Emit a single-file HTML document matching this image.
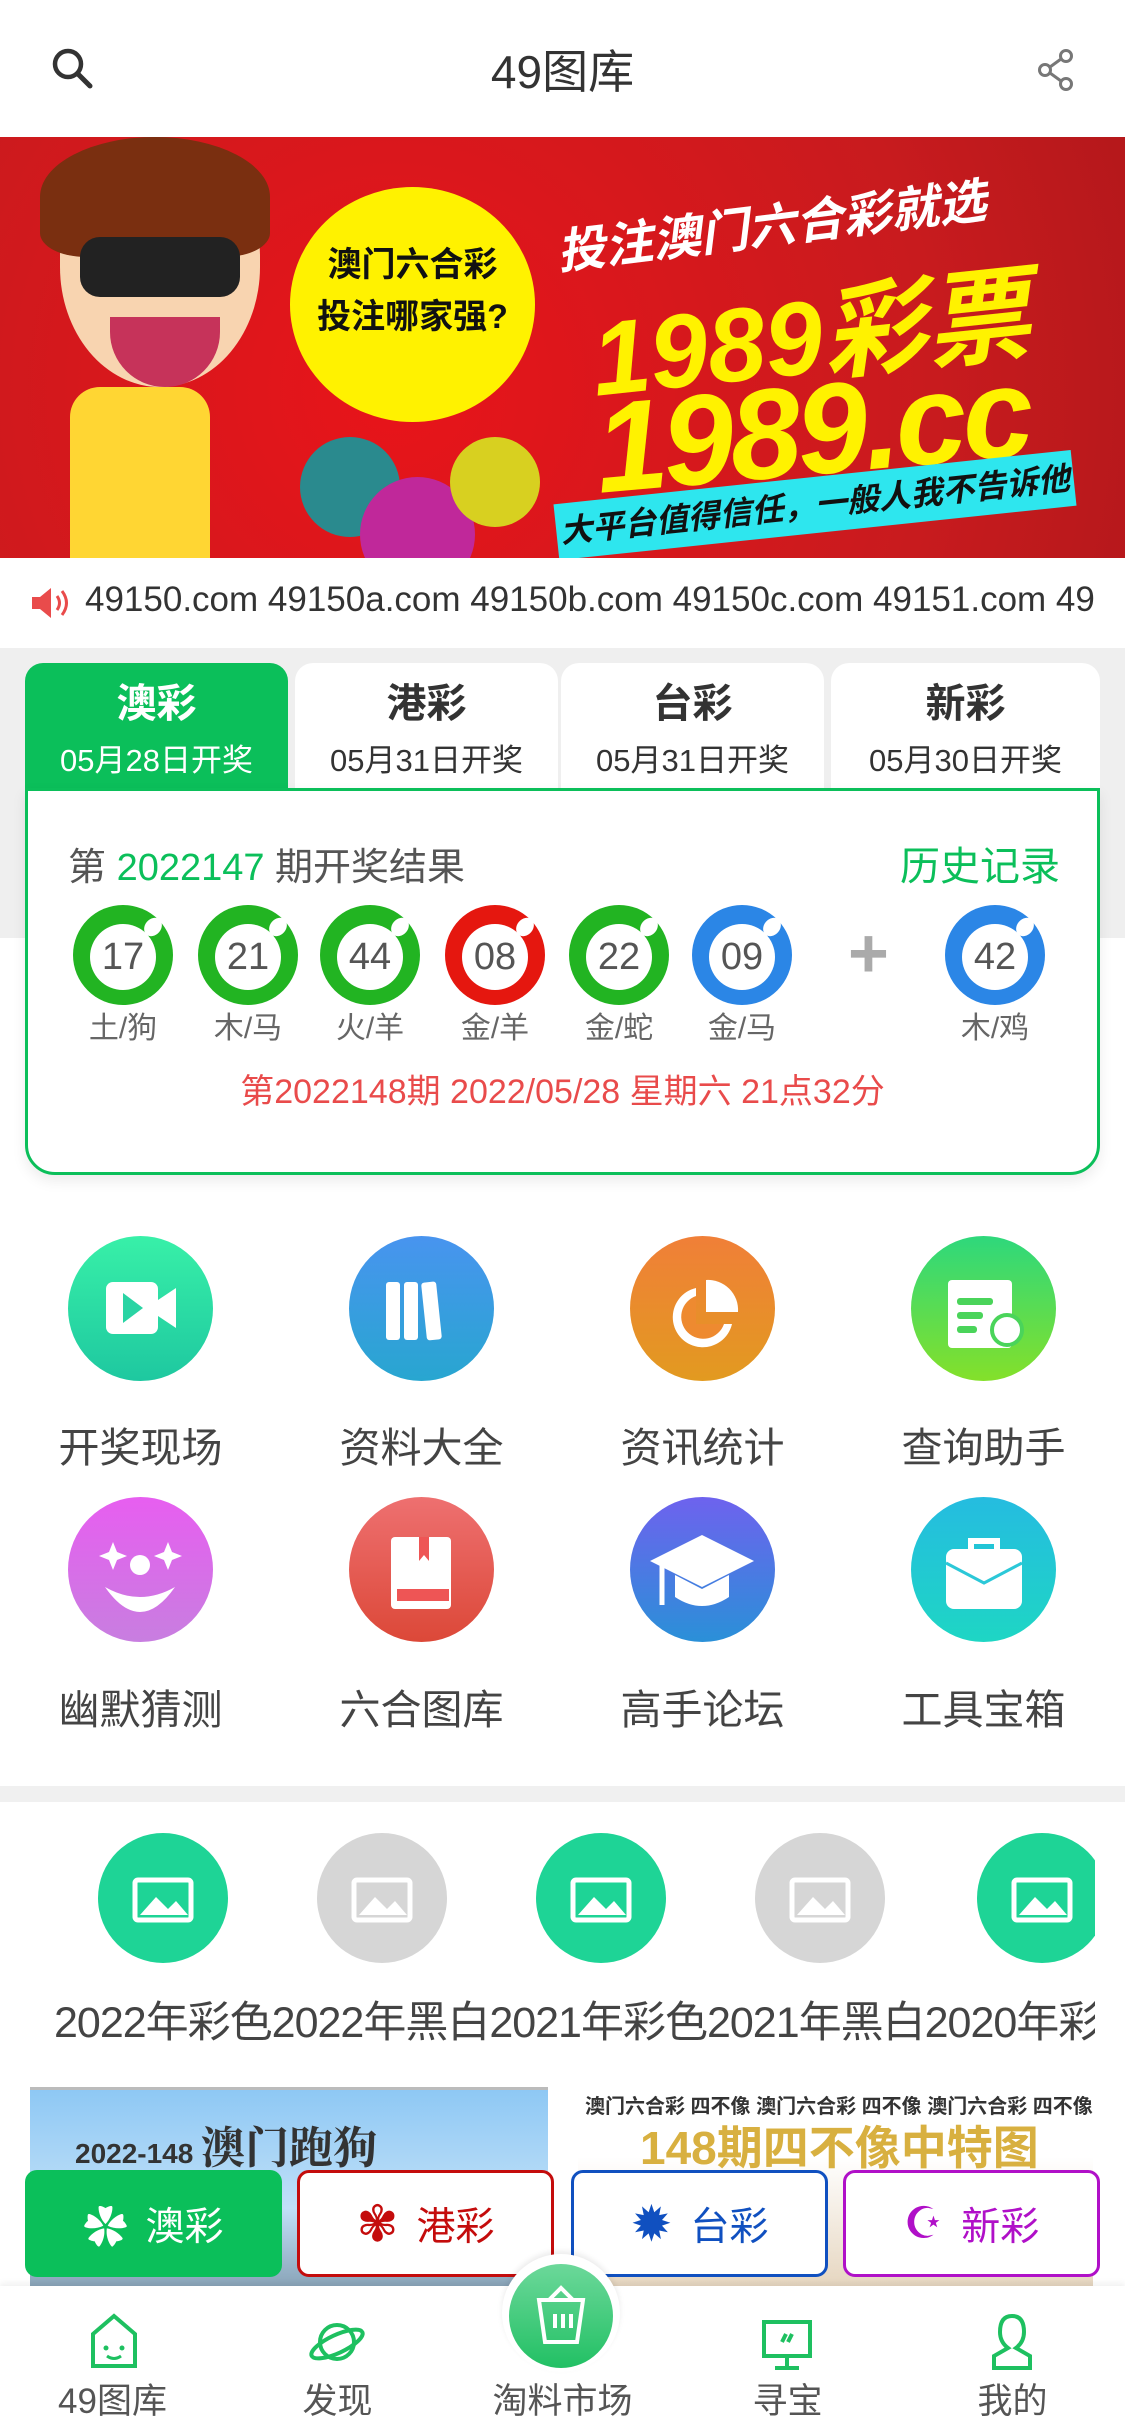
<!DOCTYPE html>
<html><head><meta charset="utf-8"><style>
*{margin:0;padding:0;box-sizing:border-box}
body{width:1125px;height:2436px;position:relative;overflow:hidden;background:#fff;font-family:"Liberation Sans","Noto Sans CJK SC",sans-serif;color:#333}
.a{position:absolute}
.c{text-align:center}
.tab{position:absolute;top:663px;height:127px;width:263px;background:#fff;border-radius:18px 18px 0 0;text-align:center}
.tab b{display:block;font-size:40px;margin-top:8px;color:#333}
.tab span{display:block;font-size:31px;margin-top:6px;color:#333}
.ball{position:absolute;top:905px;width:100px;height:100px;border-radius:50%}
.ball i{position:absolute;left:17px;top:19px;width:66px;height:66px;border-radius:50%;background:#fff;font-style:normal;font-size:38px;color:#555;line-height:66px;text-align:center}
.ball s{position:absolute;right:12px;top:12px;width:16px;height:20px;border-radius:50%;background:#fff;transform:rotate(40deg)}
.zl{position:absolute;top:1003px;width:110px;text-align:center;font-size:30px;color:#666}
.ic{position:absolute;width:145px;height:145px;border-radius:50%}
.lb{position:absolute;width:281px;text-align:center;font-size:41px;color:#444}
.gc{position:absolute;top:1833px;width:130px;height:130px;border-radius:50%}
.btn{position:absolute;top:2170px;height:107px;width:257px;border-radius:12px;font-size:39px;display:flex;align-items:center;justify-content:center;gap:18px;background:#fff}
.nv{position:absolute;top:2373px;width:225px;text-align:center;font-size:35px;color:#555}
</style></head><body>
<svg class="a" style="left:50px;top:46px" width="44" height="44" viewBox="0 0 44 44"><circle cx="18" cy="18" r="13" fill="none" stroke="#333" stroke-width="4.5"/><path d="M28 28L40 40" stroke="#333" stroke-width="5" stroke-linecap="round"/></svg>
<div class="a c" style="left:0;width:1125px;top:36px;font-size:46px;color:#333">49图库</div>
<svg class="a" style="left:1036px;top:48px" width="40" height="44" viewBox="0 0 40 44"><circle cx="30" cy="8" r="5.5" fill="none" stroke="#777" stroke-width="3"/><circle cx="9" cy="22" r="5.5" fill="none" stroke="#777" stroke-width="3"/><circle cx="30" cy="36" r="5.5" fill="none" stroke="#777" stroke-width="3"/><path d="M14 19L25 11M14 25L25 33" stroke="#777" stroke-width="3"/></svg>
<div class="a" style="left:0;top:137px;width:1125px;height:421px;background:radial-gradient(circle at 35% 60%,#e8141a,#c81b1e 70%,#b5181b);overflow:hidden">
 <div class="a" style="left:290px;top:50px;width:245px;height:235px;border-radius:50%;background:#fff200"></div>
 <div class="a c" style="left:290px;top:102px;width:245px;font-size:34px;font-weight:bold;color:#111;line-height:52px">澳门六合彩<br>投注哪家强?</div>
 <div class="a" style="left:60px;top:10px;width:200px;height:240px;border-radius:45% 45% 50% 50%;background:#f8d4b0"></div>
 <div class="a" style="left:40px;top:0;width:230px;height:120px;border-radius:50% 50% 20% 20%;background:#7a2f10"></div>
 <div class="a" style="left:80px;top:100px;width:160px;height:60px;border-radius:20px;background:#222"></div>
 <div class="a" style="left:110px;top:180px;width:110px;height:70px;border-radius:0 0 60px 60px;background:#c6335a"></div>
 <div class="a" style="left:70px;top:250px;width:140px;height:171px;background:#ffd633;border-radius:30px 30px 0 0"></div>
 <div class="a" style="left:300px;top:300px;width:100px;height:100px;border-radius:50%;background:#2a8a8e"></div>
 <div class="a" style="left:360px;top:340px;width:115px;height:115px;border-radius:50%;background:#c0289a"></div>
 <div class="a" style="left:450px;top:300px;width:90px;height:90px;border-radius:50%;background:#d8d020"></div>
 <div class="a" style="left:555px;top:50px;font-size:48px;font-weight:bold;color:#fff;font-style:italic;transform:rotate(-7deg)">投注澳门六合彩就选</div>
 <div class="a" style="left:590px;top:115px;font-size:104px;font-weight:bold;color:#fff200;font-style:italic;transform:rotate(-6deg)">1989彩票</div>
 <div class="a" style="left:595px;top:220px;font-size:128px;font-weight:bold;color:#fff200;font-style:italic;transform:rotate(-5deg);letter-spacing:-4px">1989.cc</div>
 <div class="a" style="left:555px;top:340px;width:520px;height:56px;background:#2ee6ee;transform:rotate(-6deg);font-size:32px;font-weight:bold;color:#111;text-align:center;line-height:56px;font-style:italic">大平台值得信任，一般人我不告诉他</div>
</div>
<svg class="a" style="left:30px;top:584px" width="42" height="38" viewBox="0 0 42 38"><path d="M2 13h8l11-9v30l-11-9H2z" fill="#e94b4b"/><path d="M27 12q5 7 0 14M32 7q9 12 0 24" stroke="#e94b4b" stroke-width="3" fill="none"/></svg>
<div class="a" style="left:85px;top:580px;width:1010px;overflow:hidden;white-space:nowrap;font-size:35px;color:#333">49150.com 49150a.com 49150b.com 49150c.com 49151.com 49</div>
<div class="a" style="left:0;top:648px;width:1125px;height:290px;background:#efefef"></div>
<div class="tab" style="left:25px;background:#0bbf5a"><b style="color:#fff">澳彩</b><span style="color:#fff">05月28日开奖</span></div>
<div class="tab" style="left:295px"><b>港彩</b><span>05月31日开奖</span></div>
<div class="tab" style="left:561px"><b>台彩</b><span>05月31日开奖</span></div>
<div class="tab" style="left:831px;width:269px"><b>新彩</b><span>05月30日开奖</span></div>
<div class="a" style="left:25px;top:788px;width:1075px;height:387px;background:#fff;border:3px solid #0bbf5a;border-radius:0 0 30px 30px;box-shadow:0 6px 14px rgba(0,0,0,.08)"></div>
<div class="a" style="left:68px;top:836px;font-size:38px;color:#555">第 <span style="color:#0bbf5a">2022147</span> 期开奖结果</div>
<div class="a" style="left:900px;top:834px;font-size:40px;color:#0bbf5a">历史记录</div>
<div class="ball" style="left:73px;background:#22b422"><i>17</i><s></s></div>
<div class="ball" style="left:198px;background:#22b422"><i>21</i><s></s></div>
<div class="ball" style="left:320px;background:#22b422"><i>44</i><s></s></div>
<div class="ball" style="left:445px;background:#e5170f"><i>08</i><s></s></div>
<div class="ball" style="left:569px;background:#22b422"><i>22</i><s></s></div>
<div class="ball" style="left:692px;background:#2b86e6"><i>09</i><s></s></div>
<div class="a" style="left:848px;top:918px;font-size:70px;color:#aaa;font-weight:bold;line-height:70px">+</div>
<div class="ball" style="left:945px;background:#2b86e6"><i>42</i><s></s></div>
<div class="zl" style="left:68px">土/狗</div><div class="zl" style="left:193px">木/马</div><div class="zl" style="left:315px">火/羊</div><div class="zl" style="left:440px">金/羊</div><div class="zl" style="left:564px">金/蛇</div><div class="zl" style="left:687px">金/马</div><div class="zl" style="left:940px">木/鸡</div>
<div class="a c" style="left:25px;width:1075px;top:1064px;font-size:34px;color:#e94b4b">第2022148期 2022/05/28 星期六 21点32分</div>
<div class="ic" style="left:68px;top:1236px;background:linear-gradient(#38f0a8,#1ec8a0)"><svg width="145" height="145"><rect x="38" y="46" width="52" height="52" rx="7" fill="#fff"/><path d="M90 64l18-12v40l-18-12z" fill="#fff"/><path d="M55 57v30l20-15z" fill="#2ad4a4"/></svg></div>
<div class="ic" style="left:349px;top:1236px;background:linear-gradient(#4894ef,#28a6d0)"><svg width="145" height="145"><rect x="37" y="46" width="14" height="58" rx="3" fill="#fff"/><rect x="55" y="46" width="14" height="58" rx="3" fill="#fff"/><rect x="75" y="46" width="15" height="58" rx="3" fill="#fff" transform="rotate(-6 82 75)"/></svg></div>
<div class="ic" style="left:630px;top:1236px;background:linear-gradient(#f07f38,#e29a20)"><svg width="145" height="145"><path d="M66 52A30 30 0 1 0 102 88H66z" fill="#fff"/><path d="M76 44a30 30 0 0 1 32 32H76z" fill="#fff"/><path d="M66 60A22 22 0 1 0 94 88H66z" fill="#ee8a30"/></svg></div>
<div class="ic" style="left:911px;top:1236px;background:linear-gradient(#2ed87c,#84e02a)"><svg width="145" height="145"><rect x="37" y="44" width="64" height="68" rx="4" fill="#fff"/><rect x="46" y="62" width="36" height="7" rx="3" fill="#4ad45a"/><rect x="46" y="76" width="26" height="7" rx="3" fill="#4ad45a"/><rect x="46" y="90" width="20" height="7" rx="3" fill="#4ad45a"/><circle cx="96" cy="94" r="15" fill="#fff" stroke="#4ad45a" stroke-width="4"/></svg></div>
<div class="lb" style="left:0;top:1414px">开奖现场</div><div class="lb" style="left:281px;top:1414px">资料大全</div><div class="lb" style="left:562px;top:1414px">资讯统计</div><div class="lb" style="left:843px;top:1414px">查询助手</div>
<div class="ic" style="left:68px;top:1497px;background:linear-gradient(#e75ef0,#c87ee0)"><svg width="145" height="145"><path d="M37 90q35 50 70 0q-35 20-70 0z" fill="#fff"/><circle cx="72" cy="68" r="10" fill="#fff"/><path d="M45 45l4 10 10 4-10 4-4 10-4-10-10-4 10-4z M100 45l4 10 10 4-10 4-4 10-4-10-10-4 10-4z" fill="#fff"/></svg></div>
<div class="ic" style="left:349px;top:1497px;background:linear-gradient(#ee7070,#dc4838)"><svg width="145" height="145"><rect x="42" y="40" width="60" height="72" rx="4" fill="#fff"/><path d="M70 40v24l5-6 5 6V40z" fill="#e55"/><rect x="48" y="92" width="52" height="12" fill="#e55"/></svg></div>
<div class="ic" style="left:630px;top:1497px;background:linear-gradient(#6e62ee,#2a90d8)"><svg width="145" height="145"><path d="M20 64l52-26 52 26-52 26z" fill="#fff"/><path d="M45 78v22q27 18 54 0V78l-27 14z" fill="#fff"/><path d="M32 68v40" stroke="#fff" stroke-width="5"/></svg></div>
<div class="ic" style="left:911px;top:1497px;background:linear-gradient(#25bce0,#1ed6c4)"><svg width="145" height="145"><rect x="35" y="52" width="76" height="60" rx="8" fill="#fff"/><path d="M60 52v-8h26v8" stroke="#fff" stroke-width="6" fill="none"/><path d="M35 66l38 20 38-20" stroke="#2cc8d8" stroke-width="3" fill="none"/></svg></div>
<div class="lb" style="left:0;top:1676px">幽默猜测</div><div class="lb" style="left:281px;top:1676px">六合图库</div><div class="lb" style="left:562px;top:1676px">高手论坛</div><div class="lb" style="left:843px;top:1676px">工具宝箱</div>
<div class="a" style="left:0;top:1786px;width:1125px;height:16px;background:#f0f0f0"></div>
<div class="a" style="left:0;top:1820px;width:1095px;height:240px;overflow:hidden">
<div class="gc" style="left:98px;top:13px;background:#1ed496"></div>
<div class="gc" style="left:317px;top:13px;background:#d6d6d6"></div>
<div class="gc" style="left:536px;top:13px;background:#1ed496"></div>
<div class="gc" style="left:755px;top:13px;background:#d6d6d6"></div>
<div class="gc" style="left:977px;top:13px;background:#1ed496"></div>
<svg class="a" style="left:0;top:13px" width="1125" height="130"><g fill="none" stroke="#fff" stroke-width="5"><rect x="135" y="47" width="56" height="40" rx="3"/><rect x="354" y="47" width="56" height="40" rx="3"/><rect x="573" y="47" width="56" height="40" rx="3"/><rect x="792" y="47" width="56" height="40" rx="3"/><rect x="1014" y="47" width="56" height="40" rx="3"/></g><g fill="#fff"><path d="M140 82l16-18 12 12 8-8 12 14z"/><path d="M359 82l16-18 12 12 8-8 12 14z"/><path d="M578 82l16-18 12 12 8-8 12 14z"/><path d="M797 82l16-18 12 12 8-8 12 14z"/><path d="M1019 82l16-18 12 12 8-8 12 14z"/></g></svg>
<div class="a" style="left:54px;top:168px;white-space:nowrap;font-size:43px;color:#444;letter-spacing:-1px">2022年彩色2022年黑白2021年彩色2021年黑白2020年彩色</div>
</div>
<div class="a" style="left:30px;top:2087px;width:518px;height:200px;background:linear-gradient(#8ec8f4,#c0e0f8 60%,#8aa4b8);border-top:3px solid #bbb"></div>
<div class="a" style="left:75px;top:2112px;font-size:28px;font-weight:bold;color:#333">2022-148 <span style="font-size:44px;font-family:'Noto Serif CJK SC',serif">澳门跑狗</span></div>
<div class="a" style="left:578px;top:2087px;width:515px;height:200px;background:linear-gradient(#fff 35%,#e6d6c0)"></div>
<div class="a" style="left:585px;top:2090px;font-size:20px;font-weight:bold;color:#333;white-space:nowrap">澳门六合彩 四不像 澳门六合彩 四不像 澳门六合彩 四不像</div>
<div class="a" style="left:640px;top:2112px;font-size:46px;font-weight:bold;color:#d8b040;white-space:nowrap">148期四不像中特图</div>
<div class="btn" style="left:25px;background:#0bbf5a;color:#fff"><span style="font-size:44px">✿</span>澳彩</div>
<div class="btn" style="left:297px;border:3px solid #c40c0c;color:#c40c0c"><span style="font-size:50px">✾</span>港彩</div>
<div class="btn" style="left:571px;border:3px solid #1050c0;color:#1050c0"><span style="font-size:50px">✹</span>台彩</div>
<div class="btn" style="left:843px;border:3px solid #b010c8;color:#b010c8"><span style="font-size:44px">☪</span>新彩</div>
<div class="a" style="left:0;top:2286px;width:1125px;height:150px;background:#fff;box-shadow:0 -3px 6px rgba(0,0,0,.06)"></div>
<div class="a" style="left:502px;top:2254px;width:118px;height:118px;border-radius:50%;background:#fff;box-shadow:0 -3px 6px rgba(0,0,0,.08)"></div>
<div class="a" style="left:509px;top:2264px;width:104px;height:104px;border-radius:50%;background:linear-gradient(#6cd89a,#22c064)"></div>
<svg class="a" style="left:509px;top:2264px" width="104" height="104"><path d="M40 36l12-12 12 12" stroke="#fff" stroke-width="4" fill="none"/><path d="M30 36h44l-6 42H36z" stroke="#fff" stroke-width="4" fill="none"/><path d="M46 50v14M54 50v14M62 50v14" stroke="#fff" stroke-width="4"/></svg>
<svg class="a" style="left:87px;top:2312px" width="55" height="60" viewBox="0 0 55 60"><path d="M6 22L27 4l21 18v32H6z" fill="none" stroke="#1ec060" stroke-width="4"/><circle cx="19" cy="36" r="2.5" fill="#1ec060"/><circle cx="35" cy="36" r="2.5" fill="#1ec060"/><path d="M20 44q7 5 14 0" stroke="#1ec060" stroke-width="3" fill="none"/></svg>
<svg class="a" style="left:307px;top:2312px" width="60" height="60" viewBox="0 0 60 60"><circle cx="30" cy="30" r="17" fill="none" stroke="#1ec060" stroke-width="4"/><ellipse cx="30" cy="32" rx="28" ry="9" fill="none" stroke="#1ec060" stroke-width="4" transform="rotate(-25 30 32)"/></svg>
<svg class="a" style="left:760px;top:2318px" width="55" height="55" viewBox="0 0 55 55"><rect x="4" y="4" width="46" height="34" fill="none" stroke="#1ec060" stroke-width="4"/><path d="M27 38v10M15 50h24M22 24l4-8M28 24l4-8" stroke="#1ec060" stroke-width="4"/></svg>
<svg class="a" style="left:985px;top:2312px" width="55" height="60" viewBox="0 0 55 60"><path d="M27 4q-12 0-12 16 0 10 8 16l-14 8v12h36V44l-14-8q8-6 8-16 0-16-12-16z" fill="none" stroke="#1ec060" stroke-width="4"/></svg>
<div class="nv" style="left:0">49图库</div><div class="nv" style="left:225px">发现</div><div class="nv" style="left:450px">淘料市场</div><div class="nv" style="left:675px">寻宝</div><div class="nv" style="left:900px">我的</div>
</body></html>
